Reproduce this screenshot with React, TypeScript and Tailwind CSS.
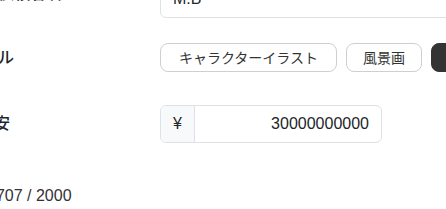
import { useState } from "react";

const styles = [
  { label: "キャラクターイラスト", width: "w-[177px]" },
  { label: "風景画", width: "w-[76px]" },
  { label: "アニメ調", width: "w-[90px]" },
];

export default function App() {
  const [name, setName] = useState("M.B");
  const [style, setStyle] = useState("アニメ調");
  const [budget, setBudget] = useState("30000000000");

  return (
    <div
      className="h-[209px] w-[446px] overflow-hidden bg-white text-[#212529]"
      style={{ fontFamily: '"Liberation Sans", "Noto Sans CJK JP", sans-serif' }}
    >
      <div className="-ml-[50px] -mt-[20px] flex w-[700px] flex-col">
        {/* Name */}
        <div className="flex items-start">
          <label className="mt-[2px] w-[210px] pl-[48px] text-base leading-6 font-medium">依頼者名</label>
          <input
            value={name}
            onChange={(e) => setName(e.target.value)}
            className="h-[38px] w-[400px] rounded-md border border-[#dee2e6] px-3 text-base outline-none"
          />
        </div>

        {/* Style */}
        <div className="mt-[25px] flex items-center">
          <label className="w-[210px] text-base font-medium">スタイル</label>
          <div className="flex gap-[9px]">
            {styles.map((s) => (
              <button
                key={s.label}
                onClick={() => setStyle(s.label)}
                className={
                  s.label === style
                    ? `h-[29px] ${s.width} shrink-0 rounded-lg border border-[#343434] bg-[#343434] text-sm whitespace-nowrap text-white`
                    : `h-[29px] ${s.width} shrink-0 rounded-lg border border-[#cfcfcf] bg-white text-sm whitespace-nowrap text-[#333]`
                }
              >
                {s.label}
              </button>
            ))}
          </div>
        </div>

        {/* Budget */}
        <div className="mt-[33px] flex items-center">
          <label className="-ml-[4px] w-[214px] text-base font-medium">予算目安</label>
          <div className="flex h-[38px] w-[222px] overflow-hidden rounded-md border border-[#dee2e6]">
            <span className="flex w-[34px] items-center justify-center border-r border-[#dee2e6] bg-[#f8f9fa] text-base">
              ¥
            </span>
            <input
              value={budget}
              onChange={(e) => setBudget(e.target.value)}
              className="min-w-0 flex-1 px-3 text-right text-base outline-none"
            />
          </div>
        </div>

        {/* Counter */}
        <div className="mt-[41px] pl-[37px] text-base leading-6 text-[#333]">1707 / 2000</div>
      </div>
    </div>
  );
}
